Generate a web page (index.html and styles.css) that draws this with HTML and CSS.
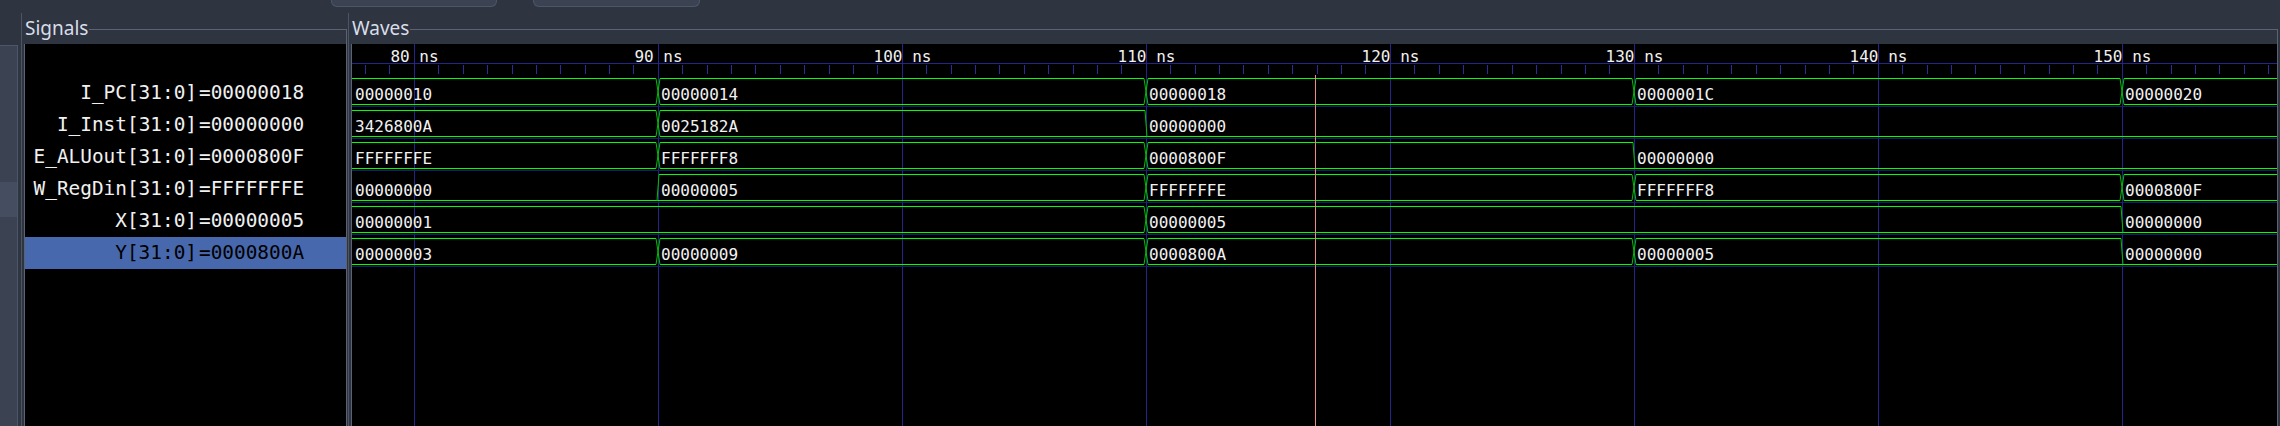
FILE: index.html
```html
<!DOCTYPE html>
<html>
<head>
<meta charset="utf-8">
<title>Waves</title>
<link rel="stylesheet" href="styles.css">
</head>
<body>
<div class="app">
  <div class="topbar">
    <div class="tabbtn tab-a"></div>
    <div class="tabbtn tab-b"></div>
  </div>
  <div class="main">
    <div class="sidebar"><div class="sidebar-thumb"></div></div>
    <section class="pane pane-signals">
      <div class="frame-head"><span class="frame-label">Signals</span><span class="frame-rule"></span></div>
      <div class="frame-body signals-body">
        <div class="sig-row"><span class="sig-name">I_PC[31:0]</span><span class="sig-val">=00000018</span></div>
        <div class="sig-row"><span class="sig-name">I_Inst[31:0]</span><span class="sig-val">=00000000</span></div>
        <div class="sig-row"><span class="sig-name">E_ALUout[31:0]</span><span class="sig-val">=0000800F</span></div>
        <div class="sig-row"><span class="sig-name">W_RegDin[31:0]</span><span class="sig-val">=FFFFFFFE</span></div>
        <div class="sig-row"><span class="sig-name">X[31:0]</span><span class="sig-val">=00000005</span></div>
        <div class="sig-row selected"><span class="sig-name">Y[31:0]</span><span class="sig-val">=0000800A</span></div>
      </div>
    </section>
    <section class="pane pane-waves">
      <div class="frame-head"><span class="frame-label">Waves</span><span class="frame-rule"></span></div>
      <div class="frame-body waves-body">
        <svg class="wave-svg" width="1925" height="382" viewBox="0 0 1925 382" xmlns="http://www.w3.org/2000/svg">
          <g class="grid" shape-rendering="crispEdges">
            <path class="grid-major" d="M62.5 0V382 M306.5 0V382 M550.5 0V382 M794.5 0V382 M1038.5 0V382 M1282.5 0V382 M1526.5 0V382 M1770.5 0V382"/>
            <path class="grid-ruler" d="M0 19.5H1925"/>
            <path class="grid-ticks" d="M13.5 21V30 M37.5 21V30 M86.5 21V30 M111.5 21V30 M135.5 21V30 M160.5 21V30 M184.5 21V30 M208.5 21V30 M233.5 21V30 M257.5 21V30 M281.5 21V30 M330.5 21V30 M355.5 21V30 M379.5 21V30 M403.5 21V30 M428.5 21V30 M452.5 21V30 M477.5 21V30 M501.5 21V30 M525.5 21V30 M574.5 21V30 M599.5 21V30 M623.5 21V30 M647.5 21V30 M672.5 21V30 M696.5 21V30 M721.5 21V30 M745.5 21V30 M769.5 21V30 M818.5 21V30 M843.5 21V30 M867.5 21V30 M891.5 21V30 M916.5 21V30 M940.5 21V30 M965.5 21V30 M989.5 21V30 M1013.5 21V30 M1062.5 21V30 M1087.5 21V30 M1111.5 21V30 M1135.5 21V30 M1160.5 21V30 M1184.5 21V30 M1209.5 21V30 M1233.5 21V30 M1257.5 21V30 M1306.5 21V30 M1331.5 21V30 M1355.5 21V30 M1379.5 21V30 M1404.5 21V30 M1428.5 21V30 M1453.5 21V30 M1477.5 21V30 M1501.5 21V30 M1550.5 21V30 M1575.5 21V30 M1599.5 21V30 M1623.5 21V30 M1648.5 21V30 M1672.5 21V30 M1697.5 21V30 M1721.5 21V30 M1745.5 21V30 M1794.5 21V30 M1819.5 21V30 M1843.5 21V30 M1867.5 21V30 M1892.5 21V30 M1916.5 21V30"/>
            <path class="grid-rowsep" d="M0 62.5H1925 M0 94.5H1925 M0 126.5H1925 M0 158.5H1925 M0 190.5H1925 M0 222.5H1925"/>
          </g>
          <g class="ruler-text">
            <text x="62.5" y="17.5">80 ns</text>
            <text x="306.5" y="17.5">90 ns</text>
            <text x="550.5" y="17.5">100 ns</text>
            <text x="794.5" y="17.5">110 ns</text>
            <text x="1038.5" y="17.5">120 ns</text>
            <text x="1282.5" y="17.5">130 ns</text>
            <text x="1526.5" y="17.5">140 ns</text>
            <text x="1770.5" y="17.5">150 ns</text>
          </g>
          <g class="vbox" shape-rendering="crispEdges">
            <!-- I_PC -->
            <path d="M0 34.5H304 M308 34.5H792 M796 34.5H1280 M1284 34.5H1768 M1772 34.5H1925 M0 60.5H304 M308 60.5H792 M796 60.5H1280 M1284 60.5H1768 M1772 60.5H1925"/>
            <!-- I_Inst -->
            <path d="M0 66.5H304 M308 66.5H793 M0 92.5H304 M308 92.5H1925"/>
            <!-- E_ALUout -->
            <path d="M0 98.5H304 M308 98.5H792 M796 98.5H1281 M0 124.5H304 M308 124.5H792 M796 124.5H1925"/>
            <!-- W_RegDin -->
            <path d="M307 130.5H792 M796 130.5H1280 M1284 130.5H1768 M1772 130.5H1925 M0 156.5H792 M796 156.5H1280 M1284 156.5H1768 M1772 156.5H1925"/>
            <!-- X -->
            <path d="M0 162.5H792 M796 162.5H1769 M0 188.5H792 M796 188.5H1925"/>
            <!-- Y -->
            <path d="M0 194.5H304 M308 194.5H792 M796 194.5H1280 M1284 194.5H1769 M0 220.5H304 M308 220.5H792 M796 220.5H1280 M1284 220.5H1925"/>
          </g>
          <g class="vtrans">
            <path d="M304 34.5L308 60.5M304 60.5L308 34.5 M792 34.5L796 60.5M792 60.5L796 34.5 M1280 34.5L1284 60.5M1280 60.5L1284 34.5 M1768 34.5L1772 60.5M1768 60.5L1772 34.5"/>
            <path d="M304 66.5L308 92.5M304 92.5L308 66.5 M793 66.5L795 92.5"/>
            <path d="M304 98.5L308 124.5M304 124.5L308 98.5 M792 98.5L796 124.5M792 124.5L796 98.5 M1281 98.5L1283 124.5"/>
            <path d="M305 156.5L307 130.5 M792 130.5L796 156.5M792 156.5L796 130.5 M1280 130.5L1284 156.5M1280 156.5L1284 130.5 M1768 130.5L1772 156.5M1768 156.5L1772 130.5"/>
            <path d="M792 162.5L796 188.5M792 188.5L796 162.5 M1769 162.5L1771 188.5"/>
            <path d="M304 194.5L308 220.5M304 220.5L308 194.5 M792 194.5L796 220.5M792 220.5L796 194.5 M1280 194.5L1284 220.5M1280 220.5L1284 194.5 M1769 194.5L1771 220.5"/>
          </g>
          <g class="vtext">
            <text x="3" y="56">00000010</text>
            <text x="309" y="56">00000014</text>
            <text x="797" y="56">00000018</text>
            <text x="1285" y="56">0000001C</text>
            <text x="1773" y="56">00000020</text>

            <text x="3" y="88">3426800A</text>
            <text x="309" y="88">0025182A</text>
            <text x="797" y="88">00000000</text>

            <text x="3" y="120">FFFFFFFE</text>
            <text x="309" y="120">FFFFFFF8</text>
            <text x="797" y="120">0000800F</text>
            <text x="1285" y="120">00000000</text>

            <text x="3" y="152">00000000</text>
            <text x="309" y="152">00000005</text>
            <text x="797" y="152">FFFFFFFE</text>
            <text x="1285" y="152">FFFFFFF8</text>
            <text x="1773" y="152">0000800F</text>

            <text x="3" y="184">00000001</text>
            <text x="797" y="184">00000005</text>
            <text x="1773" y="184">00000000</text>

            <text x="3" y="216">00000003</text>
            <text x="309" y="216">00000009</text>
            <text x="797" y="216">0000800A</text>
            <text x="1285" y="216">00000005</text>
            <text x="1773" y="216">00000000</text>
          </g>
          <path class="cursor" d="M963.5 31V382" shape-rendering="crispEdges"/>
        </svg>
      </div>
    </section>
  </div>
</div>
</body>
</html>
```

FILE: styles.css
```css
* { box-sizing: border-box; }

html, body {
  margin: 0;
  padding: 0;
  background: #2e3440;
  overflow: hidden;
}

.app {
  width: 2280px;
  height: 426px;
  display: flex;
  flex-direction: column;
  background: #2e3440;
  font-family: "Noto Sans", "DejaVu Sans", sans-serif;
}

.topbar {
  height: 13px;
  flex: none;
  display: flex;
  align-items: flex-start;
}

.tabbtn {
  height: 7px;
  background: #3b4252;
  border: 1px solid #4c566a;
  border-top: none;
  border-radius: 0 0 6px 6px;
}

.tab-a { width: 166px; margin-left: 331px; }
.tab-b { width: 167px; margin-left: 36px; }

.main {
  flex: 1;
  display: flex;
  min-height: 0;
}

.sidebar {
  width: 18px;
  margin-top: 32px;
  margin-right: 3px;
  background: #3b4252;
  border-top: 1px solid #4c566a;
  border-right: 1px solid #4c566a;
  padding-top: 136px;
}

.sidebar-thumb {
  height: 35px;
  background: #454e60;
}

.pane {
  display: flex;
  flex-direction: column;
  border-left: 1px solid #4c5566;
}

.pane-signals { width: 327px; }
.pane-waves { flex: 1; }

.frame-head {
  height: 31px;
  flex: none;
  display: flex;
  padding-left: 2px;
}

.frame-label {
  margin-top: 6px;
  height: 19px;
  line-height: 19px;
  padding: 0 1px;
  font-size: 19px;
  color: #d8dee9;
  white-space: nowrap;
}

.frame-rule {
  flex: 1;
  margin-top: 16px;
  border-top: 1px solid #5a6273;
  border-right: 1px solid #5a6273;
}

.pane-signals .frame-rule { margin-right: 1px; }
.pane-waves .frame-rule { margin-right: 2px; }

.frame-body {
  flex: 1;
  background: #000;
  border-left: 1px solid #5a6273;
  border-right: 1px solid #5a6273;
  margin-left: 2px;
  overflow: hidden;
}

.signals-body { margin-right: 1px; padding-top: 33px; }
.waves-body { margin-right: 2px; }

.sig-row {
  display: flex;
  height: 32px;
  line-height: 32px;
  font-family: "DejaVu Sans Mono", monospace;
  font-size: 19.4px;
  color: #f0f0f0;
  white-space: nowrap;
}

.sig-name {
  width: 172px;
  text-align: right;
}

.sig-val {
  padding-left: 2px;
}

.sig-row.selected {
  background: #4868ad;
  color: #000;
}

.wave-svg { display: block; }

.grid-major { stroke: #24248a; stroke-width: 1; fill: none; }
.grid-ruler { stroke: #24248a; stroke-width: 1; fill: none; }
.grid-ticks { stroke: #2c2c99; stroke-width: 1; fill: none; }
.grid-rowsep { stroke: #1c1c6c; stroke-width: 1; fill: none; }

.ruler-text text {
  font-family: "DejaVu Sans Mono", monospace;
  font-size: 16px;
  fill: #f0f0f0;
  text-anchor: middle;
}

.vbox path { stroke: #00ff00; stroke-width: 1; fill: none; }
.vtrans path { stroke: #00c000; stroke-width: 1; fill: none; }

.vtext text {
  font-family: "DejaVu Sans Mono", monospace;
  font-size: 16px;
  fill: #f2f2f2;
}

.cursor { stroke: #f08888; stroke-width: 1; fill: none; }
```
